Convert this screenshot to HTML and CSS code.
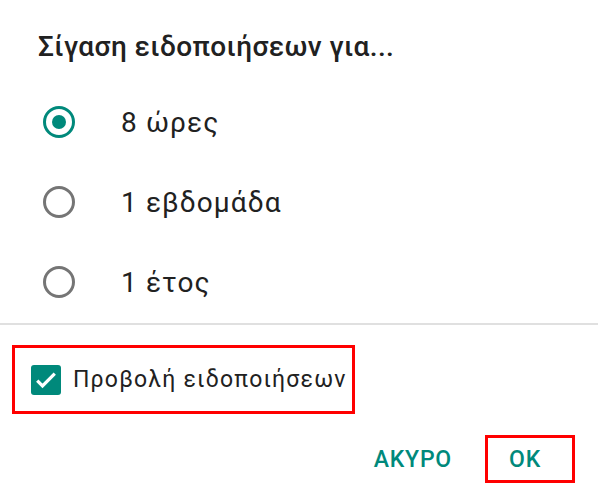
FILE: index.html
```html
<!doctype html>
<html>
	<head>
		<meta charset="UTF-8"/>
		<title>Σίγαση ειδοποιήσεων</title>
		<link rel="stylesheet" href="styles.css">
	</head>
<body>
	<div class="dialog">
		<h1 class="title">Σίγαση ειδοποιήσεων για...</h1>
		<div class="options">
			<label class="option">
				<span class="radio on"></span>
				<span class="label">8 ώρες</span>
			</label>
			<label class="option">
				<span class="radio"></span>
				<span class="label">1 εβδομάδα</span>
			</label>
			<label class="option">
				<span class="radio"></span>
				<span class="label">1 έτος</span>
			</label>
		</div>
		<div class="divider"></div>
		<div class="check-row marked">
			<span class="checkbox">
				<svg width="28" height="28" viewBox="0 0 24 24"><path d="M4.5 12.5l4.5 4.5L19.5 6.5" fill="none" stroke="#fff" stroke-width="2.8"/></svg>
			</span>
			<span class="check-label">Προβολή ειδοποιήσεων</span>
		</div>
		<div class="buttons">
			<a href="javascript:;" class="btn">ΑΚΥΡΟ</a>
			<a href="javascript:;" class="btn marked ok">OK</a>
		</div>
	</div>
</body>
</html>
```

FILE: styles.css
```css
*{margin:0;padding:0;box-sizing:border-box;text-decoration:none;}
body{background:#fff;font-family:Roboto,"Noto Sans",sans-serif;color:#212121;}
.dialog{width:598px;height:500px;overflow:hidden;}
.title{padding:31px 0 0 38px;font-size:28px;line-height:32px;font-weight:500;letter-spacing:0.4px;color:#212121;}
.options{margin-top:19px;padding-bottom:1px;}
.option{display:flex;align-items:center;height:80px;padding-left:43px;}
.radio{width:32px;height:32px;border:3.5px solid #757575;border-radius:50%;display:flex;align-items:center;justify-content:center;}
.radio.on{border-color:#00897b;}
.radio.on:after{content:"";width:14px;height:14px;border-radius:50%;background:#00897b;}
.label{margin-left:46px;font-size:28px;letter-spacing:1.1px;color:#212121;}
.divider{height:2px;background:#e0e0e0;}
.marked{border:3px solid #f00;}
.check-row{display:flex;align-items:center;width:343px;height:69px;margin:20px 0 0 12px;padding-left:16px;}
.checkbox{width:30px;height:30px;border-radius:3px;background:#00897b;display:flex;align-items:center;justify-content:center;}
.check-label{margin-left:12px;font-size:23px;letter-spacing:1.2px;color:#212121;}
.buttons{display:flex;justify-content:flex-end;align-items:center;gap:33px;margin-top:21px;padding-right:23px;}
.btn{display:flex;align-items:center;height:48px;font-size:23px;font-weight:500;letter-spacing:0.8px;color:#00897b;}
.btn.ok{padding:0 31px 0 21px;}
```
